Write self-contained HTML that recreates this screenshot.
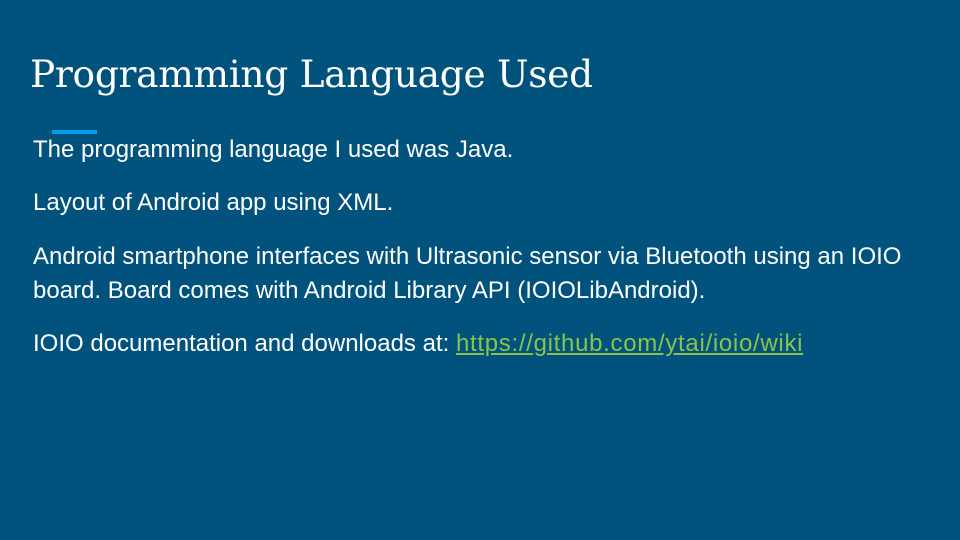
<!DOCTYPE html>
<html><head><style>
body{margin:0;width:960px;height:540px;background:#01527d;overflow:hidden;position:relative;font-family:"Liberation Sans",sans-serif;color:#fff}
h1{position:absolute;left:30px;top:49px;margin:0;font-family:"DejaVu Serif",serif;font-weight:normal;font-size:37.5px;line-height:50px;letter-spacing:-0.3px}
.bar{position:absolute;left:52px;top:130px;width:45px;height:4px;background:#00a0e6}
.t{position:absolute;left:33px;font-size:24px;line-height:34px;margin:0;white-space:nowrap}
a{color:#8bc34a;text-decoration:underline;letter-spacing:0.7px}
</style></head><body>
<h1>Programming Language Used</h1>
<div class="bar"></div>
<p class="t" style="top:133px">The programming language I used was Java.</p>
<p class="t" style="top:186px">Layout of Android app using XML.</p>
<p class="t" style="top:240px">Android smartphone interfaces with Ultrasonic sensor via Bluetooth using an IOIO<br>board. Board comes with Android Library API (IOIOLibAndroid).</p>
<p class="t" style="top:327px">IOIO documentation and downloads at: <a>https://github.com/ytai/ioio/wiki</a></p>
</body></html>
